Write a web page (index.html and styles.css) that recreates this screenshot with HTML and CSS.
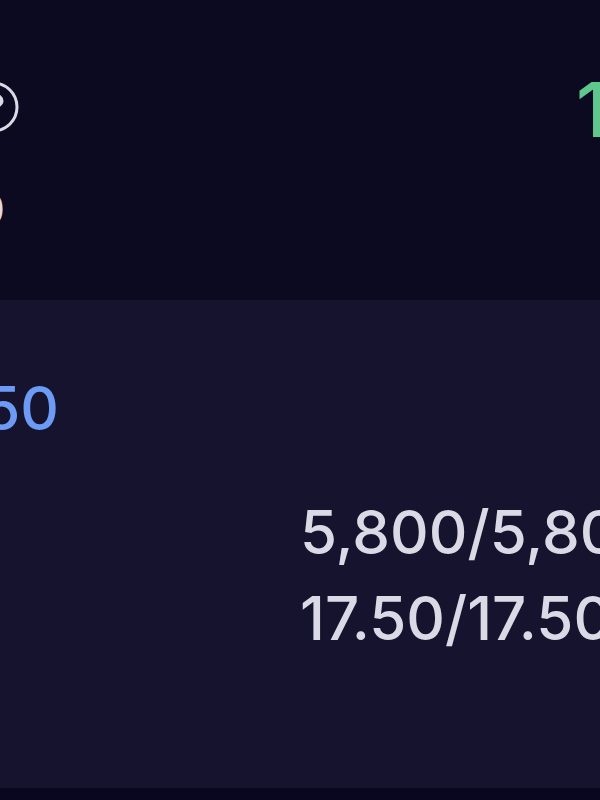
FILE: index.html
```
<!DOCTYPE html>
<html lang="en">
<head>
<meta charset="utf-8">
<meta name="viewport" content="width=device-width, initial-scale=1">
<title>Order</title>
<link rel="stylesheet" href="styles.css">
</head>
<body>
<header class="summary">
  <div class="summary-left">
    <svg class="help" viewBox="0 0 52 52" aria-hidden="true">
      <circle cx="26" cy="26" r="24" fill="none" stroke="currentColor" stroke-width="3"/>
      <path d="M24 21c0-7 10-7 10-1 0 4-6 5-8 7" fill="none" stroke="currentColor" stroke-width="5"/>
    </svg>
    <span class="unit">0</span>
  </div>
  <span class="gain">1</span>
</header>
<main class="details">
  <div class="price">50</div>
  <div class="figures">
    <div>5,800/5,800</div>
    <div>17.50/17.50</div>
  </div>
</main>
</body>
</html>
```
FILE: styles.css
```
body {
  margin: 0;
  min-height: 100vh;
  overflow: hidden;
  background: #090620;
  color: #dad9e5;
  font: 450 60px/86px Inter, "Liberation Sans", sans-serif;
}

.summary {
  display: flex;
  justify-content: space-between;
  box-sizing: border-box;
  height: 300px;
  padding-top: 66px;
  background: #0c0a21;
}

.summary-left {
  display: flex;
  flex-direction: column;
  align-items: flex-end;
  gap: 18px;
  width: 5px;
}

.help {
  flex: none;
  width: 52px;
  height: 52px;
  margin: 15px -14px;
}

.unit {
  font-size: 44px;
}

.gain {
  width: 24px;
  color: #5fc78c;
  font-size: 76px;
  font-weight: 500;
}

.details {
  box-sizing: border-box;
  height: 488px;
  padding-top: 65px;
  background: #16132e;
}

.price {
  display: flex;
  justify-content: flex-end;
  width: 59px;
  color: #6c9af5;
}

.figures {
  margin: 38px 0 0 50%;
  white-space: nowrap;
}
```
